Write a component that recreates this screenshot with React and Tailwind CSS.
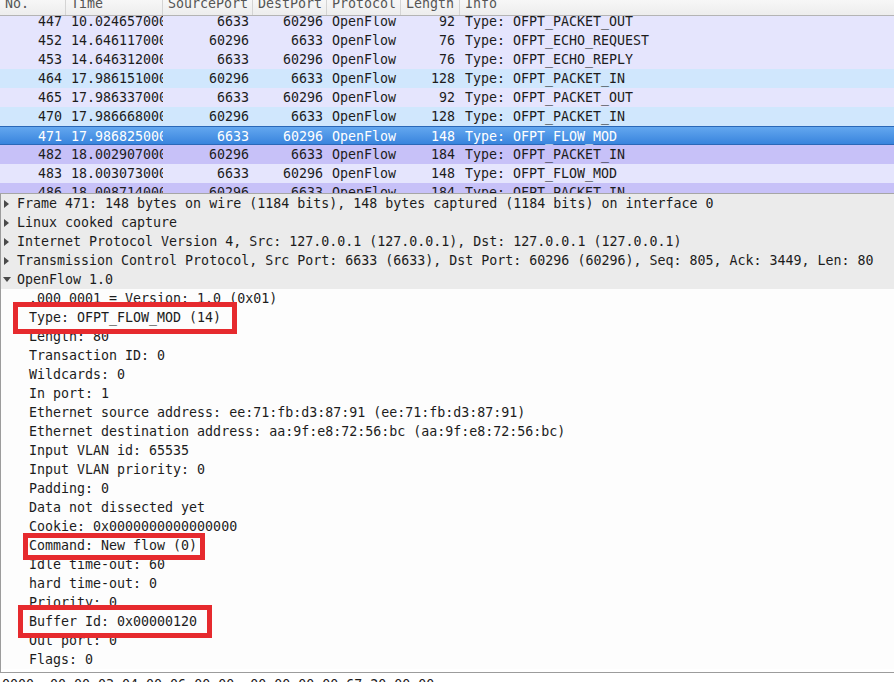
import React from "react";

const packets = [
  { no: 447, time: "10.024657000", src: "6633", dst: "60296", len: 92, info: "Type: OFPT_PACKET_OUT", kind: "lav" },
  { no: 452, time: "14.646117000", src: "60296", dst: "6633", len: 76, info: "Type: OFPT_ECHO_REQUEST", kind: "lav" },
  { no: 453, time: "14.646312000", src: "6633", dst: "60296", len: 76, info: "Type: OFPT_ECHO_REPLY", kind: "lav" },
  { no: 464, time: "17.986151000", src: "60296", dst: "6633", len: 128, info: "Type: OFPT_PACKET_IN", kind: "blue" },
  { no: 465, time: "17.986337000", src: "6633", dst: "60296", len: 92, info: "Type: OFPT_PACKET_OUT", kind: "lav" },
  { no: 470, time: "17.986668000", src: "60296", dst: "6633", len: 128, info: "Type: OFPT_PACKET_IN", kind: "blue" },
  { no: 471, time: "17.986825000", src: "6633", dst: "60296", len: 148, info: "Type: OFPT_FLOW_MOD", kind: "sel" },
  { no: 482, time: "18.002907000", src: "60296", dst: "6633", len: 184, info: "Type: OFPT_PACKET_IN", kind: "purple" },
  { no: 483, time: "18.003073000", src: "6633", dst: "60296", len: 148, info: "Type: OFPT_FLOW_MOD", kind: "lav" },
  { no: 486, time: "18.008714000", src: "60296", dst: "6633", len: 184, info: "Type: OFPT_PACKET_IN", kind: "purple" },
];

const rowStyles = {
  lav: "bg-[#e5e5fd] text-[#1c1c1c]",
  blue: "bg-[#d0e7fd] text-[#1c1c1c]",
  purple: "bg-[#c7c1f8] text-[#1c1c1c]",
  sel: "bg-gradient-to-b from-[#63a7ef] to-[#3884dd] border-y border-[#2a68b8] text-white",
};

const topItems = [
  "Frame 471: 148 bytes on wire (1184 bits), 148 bytes captured (1184 bits) on interface 0",
  "Linux cooked capture",
  "Internet Protocol Version 4, Src: 127.0.0.1 (127.0.0.1), Dst: 127.0.0.1 (127.0.0.1)",
  "Transmission Control Protocol, Src Port: 6633 (6633), Dst Port: 60296 (60296), Seq: 805, Ack: 3449, Len: 80",
];

const fields = [
  ".000 0001 = Version: 1.0 (0x01)",
  "Type: OFPT_FLOW_MOD (14)",
  "Length: 80",
  "Transaction ID: 0",
  "Wildcards: 0",
  "In port: 1",
  "Ethernet source address: ee:71:fb:d3:87:91 (ee:71:fb:d3:87:91)",
  "Ethernet destination address: aa:9f:e8:72:56:bc (aa:9f:e8:72:56:bc)",
  "Input VLAN id: 65535",
  "Input VLAN priority: 0",
  "Padding: 0",
  "Data not dissected yet",
  "Cookie: 0x0000000000000000",
  "Command: New flow (0)",
  "Idle time-out: 60",
  "hard time-out: 0",
  "Priority: 0",
  "Buffer Id: 0x00000120",
  "Out port: 0",
  "Flags: 0",
];

const RightTri = () => (
  <svg width="6" height="8" viewBox="0 0 6 8" className="block">
    <polygon points="0,0 5,4 0,8" fill="#4a4a4a" />
  </svg>
);

const DownTri = () => (
  <svg width="8" height="6" viewBox="0 0 8 6" className="block">
    <polygon points="0,0 8,0 4,5" fill="#4a4a4a" />
  </svg>
);

const HeadCell = ({ w, children }) => (
  <div className={`${w} shrink-0 h-full border-r border-[#d4d4d4] pl-[5px] overflow-hidden`}>
    <div className="leading-[19px] -mt-[6px] whitespace-nowrap">{children}</div>
  </div>
);

const App = () => {
  return (
    <div className="relative w-[894px] h-[682px] overflow-hidden bg-white font-['DejaVu_Sans_Mono',monospace] text-[13.3px] text-[#1c1c1c]">
      {/* column header */}
      <div className="flex h-[16px] bg-gradient-to-b from-[#f7f7f7] to-[#ededed] border-b border-[#b4b4b4] text-[#555] overflow-hidden">
        <HeadCell w="w-[66px]">No.</HeadCell>
        <HeadCell w="w-[97px]">Time</HeadCell>
        <HeadCell w="w-[90px]">SourcePort</HeadCell>
        <HeadCell w="w-[74px]">DestPort</HeadCell>
        <HeadCell w="w-[74px]">Protocol</HeadCell>
        <HeadCell w="w-[59px]">Length</HeadCell>
        <HeadCell w="flex-1 border-r-0">Info</HeadCell>
      </div>

      {/* packet list */}
      <div className="h-[178px] overflow-hidden border-b border-[#a6a6a6]">
        <div className="-mt-[4px]">
          {packets.map((p) => (
            <div key={p.no} className={`flex h-[19px] leading-[19px] whitespace-nowrap ${rowStyles[p.kind]}`}>
              <div className="w-[66px] shrink-0 text-right pr-[4px]">{p.no}</div>
              <div className="w-[97px] shrink-0 pl-[5px] overflow-hidden">{p.time}</div>
              <div className="w-[90px] shrink-0 text-right pr-[4px]">{p.src}</div>
              <div className="w-[74px] shrink-0 text-right pr-[4px]">{p.dst}</div>
              <div className="w-[74px] shrink-0 pl-[5px]">OpenFlow</div>
              <div className="w-[59px] shrink-0 text-right pr-[5px]">{p.len}</div>
              <div className="flex-1 pl-[5px]">{p.info}</div>
            </div>
          ))}
        </div>
      </div>

      {/* packet details */}
      <div className="h-[479px] border-l border-b border-[#9c9c9c] overflow-hidden">
        <div className="bg-[#ebebeb]">
          {topItems.map((t) => (
            <div key={t} className="flex items-center h-[19px] whitespace-nowrap">
              <div className="w-[16px] shrink-0 pl-[3px]">
                <RightTri />
              </div>
              <span className="leading-[19px]">{t}</span>
            </div>
          ))}
          <div className="flex items-center h-[19px] whitespace-nowrap">
            <div className="w-[16px] shrink-0 pl-[2px]">
              <DownTri />
            </div>
            <span className="leading-[19px]">OpenFlow 1.0</span>
          </div>
        </div>
        <div className="bg-[#fdfdfd]">
          {fields.map((f) => (
            <div key={f} className="h-[19px] leading-[19px] pl-[28px] whitespace-nowrap">
              {f}
            </div>
          ))}
        </div>
      </div>

      {/* hex dump */}
      <div className="pt-[2px] pl-[2px] leading-[19px] whitespace-pre bg-white">
        {"0000  00 00 03 04 00 06 00 00  00 00 00 00 67 20 00 00"}
      </div>

      {/* highlight boxes */}
      <div className="absolute left-[13px] top-[302px] w-[224px] h-[32px] border-[5px] border-[#e62a2e]" />
      <div className="absolute left-[23px] top-[533px] w-[182px] h-[27px] border-[5px] border-[#e62a2e]" />
      <div className="absolute left-[18px] top-[605px] w-[194px] h-[33px] border-[5px] border-[#e62a2e]" />
    </div>
  );
};

export default App;
